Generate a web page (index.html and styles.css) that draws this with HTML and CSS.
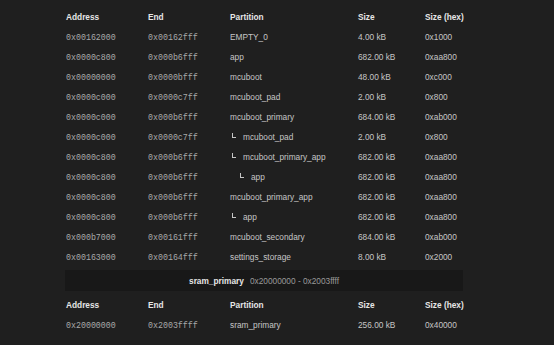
FILE: index.html
```html
<!DOCTYPE html>
<html lang="en">
<head>
    <meta charset="UTF-8">
    <title>Partition Map</title>
    <link rel="stylesheet" href="styles.css">
</head>
<body>
    <div class="wrap">
        <!-- flash partitions -->
        <div class="grid">
            <div class="row head">
                <div>Address</div><div>End</div><div>Partition</div><div>Size</div><div>Size (hex)</div>
            </div>
            <div class="row"><div class="mono">0x00162000</div><div class="mono">0x00162fff</div><div>EMPTY_0</div><div>4.00 kB</div><div>0x1000</div></div>
            <div class="row"><div class="mono">0x0000c800</div><div class="mono">0x000b6fff</div><div>app</div><div>682.00 kB</div><div>0xaa800</div></div>
            <div class="row"><div class="mono">0x00000000</div><div class="mono">0x0000bfff</div><div>mcuboot</div><div>48.00 kB</div><div>0xc000</div></div>
            <div class="row"><div class="mono">0x0000c000</div><div class="mono">0x0000c7ff</div><div>mcuboot_pad</div><div>2.00 kB</div><div>0x800</div></div>
            <div class="row"><div class="mono">0x0000c000</div><div class="mono">0x000b6fff</div><div>mcuboot_primary</div><div>684.00 kB</div><div>0xab000</div></div>
            <div class="row"><div class="mono">0x0000c000</div><div class="mono">0x0000c7ff</div><div><span class="tree l1"></span>mcuboot_pad</div><div>2.00 kB</div><div>0x800</div></div>
            <div class="row"><div class="mono">0x0000c800</div><div class="mono">0x000b6fff</div><div><span class="tree l1"></span>mcuboot_primary_app</div><div>682.00 kB</div><div>0xaa800</div></div>
            <div class="row"><div class="mono">0x0000c800</div><div class="mono">0x000b6fff</div><div><span class="tree l2"></span>app</div><div>682.00 kB</div><div>0xaa800</div></div>
            <div class="row"><div class="mono">0x0000c800</div><div class="mono">0x000b6fff</div><div>mcuboot_primary_app</div><div>682.00 kB</div><div>0xaa800</div></div>
            <div class="row"><div class="mono">0x0000c800</div><div class="mono">0x000b6fff</div><div><span class="tree l1"></span>app</div><div>682.00 kB</div><div>0xaa800</div></div>
            <div class="row"><div class="mono">0x000b7000</div><div class="mono">0x00161fff</div><div>mcuboot_secondary</div><div>684.00 kB</div><div>0xab000</div></div>
            <div class="row"><div class="mono">0x00163000</div><div class="mono">0x00164fff</div><div>settings_storage</div><div>8.00 kB</div><div>0x2000</div></div>
        </div>

        <!-- region banner -->
        <div class="region">
            <span class="region-name">sram_primary</span>
            <span class="region-range">0x20000000 - 0x2003ffff</span>
        </div>

        <div class="grid">
            <div class="row head">
                <div>Address</div><div>End</div><div>Partition</div><div>Size</div><div>Size (hex)</div>
            </div>
            <div class="row"><div class="mono">0x20000000</div><div class="mono">0x2003ffff</div><div>sram_primary</div><div>256.00 kB</div><div>0x40000</div></div>
        </div>
    </div>
</body>
</html>
```

FILE: styles.css
```css
* { box-sizing: border-box; margin: 0; padding: 0; }
body { background: #1f1f1f; color: #c6c6c6; font-family: 'Liberation Sans', Arial, sans-serif; font-size: 8.3px; }
.wrap { width: 398px; margin-left: 65px; padding-top: 7px; }
.row { display: grid; grid-template-columns: 82px 82px 128px 67px auto; height: 20px; align-items: center; padding-left: 1px; white-space: nowrap; }
.head { color: #e6e6e6; font-weight: bold; }
.mono { font-family: 'Liberation Mono', 'Courier New', monospace; font-size: 8.3px; color: #a9a9a9; }
.tree { display: inline-block; width: 4px; height: 5px; border-left: 1px solid #c6c6c6; border-bottom: 1px solid #c6c6c6; margin-right: 7px; vertical-align: 2px; }
.tree.l1 { margin-left: 2px; }
.tree.l2 { margin-left: 10px; }
.region { background: #181818; height: 21px; margin: 3px 0 4px; display: flex; align-items: center; justify-content: center; gap: 6px; }
.region-name { color: #e6e6e6; font-weight: bold; }
.region-range { color: #9a9a9a; }
```
